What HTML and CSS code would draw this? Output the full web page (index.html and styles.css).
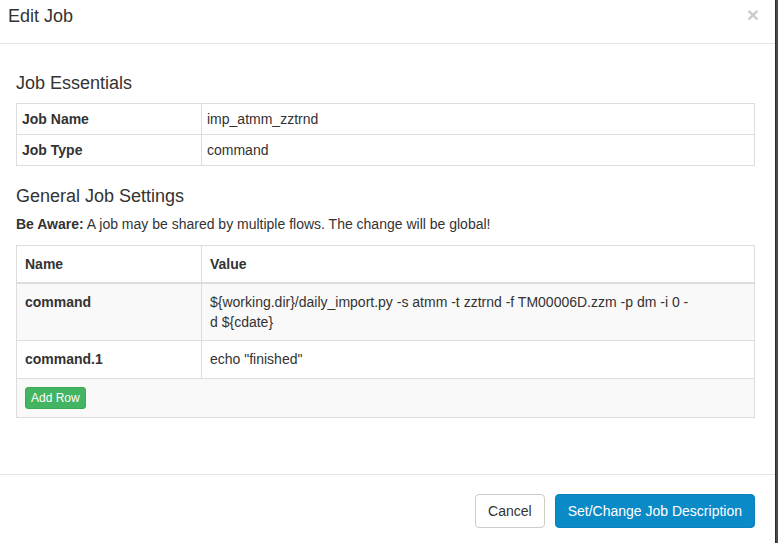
FILE: index.html
```html
<!DOCTYPE html>
<html>
<head>
<meta charset="utf-8">
<link rel="stylesheet" href="styles.css">
</head>
<body>
<div class="modal">
  <div class="modal-header">
    <h3 class="modal-title">Edit Job</h3>
    <span class="close">&times;</span>
  </div>
  <div class="modal-body">
    <h4 class="section-title">Job Essentials</h4>
    <table class="table table-condensed">
      <tbody>
        <tr><th class="col-name">Job Name</th><td>imp_atmm_zztrnd</td></tr>
        <tr><th class="col-name">Job Type</th><td>command</td></tr>
      </tbody>
    </table>
    <h4 class="section-title">General Job Settings</h4>
    <p class="aware"><strong>Be Aware:</strong> A job may be shared by multiple flows. The change will be global!</p>
    <table class="table table-params">
      <thead>
        <tr><th class="col-name">Name</th><th>Value</th></tr>
      </thead>
      <tbody>
        <tr class="striped"><th>command</th><td>${working.dir}/daily_import.py -s atmm -t zztrnd -f TM00006D.zzm -p dm -i 0 -<br>d ${cdate}</td></tr>
        <tr class="single"><th>command.1</th><td>echo "finished"</td></tr>
        <tr class="striped"><td colspan="2"><button class="btn btn-success btn-xs">Add Row</button></td></tr>
      </tbody>
    </table>
  </div>
  <div class="modal-footer">
    <button class="btn btn-default">Cancel</button>
    <button class="btn btn-primary">Set/Change Job Description</button>
  </div>
</div>
</body>
</html>
```
FILE: styles.css
```css
html, body {
  margin: 0;
  padding: 0;
  height: 100%;
}
body {
  background: #4a4a4a;
  font-family: "Liberation Sans", Arial, sans-serif;
  font-size: 14px;
  line-height: 20px;
  color: #333;
  overflow: hidden;
}
.modal {
  width: 775px;
  height: 543px;
  background: #fff;
  border-right: 1px solid #2b2b2b;
  display: flex;
  flex-direction: column;
}
.modal-header {
  flex-shrink: 0;
  border-bottom: 1px solid #e5e5e5;
  display: flex;
  justify-content: space-between;
  align-items: flex-start;
  padding: 4px 20px 0 8px;
  height: 39px;
}
.modal-title {
  margin: 0;
  font-size: 18px;
  font-weight: normal;
  line-height: 25px;
  color: #333;
}
.close {
  font-size: 21px;
  font-weight: bold;
  line-height: 21px;
  color: #000;
  opacity: 0.2;
  margin-top: 0;
  margin-right: -4px;
}
.modal-body {
  flex-shrink: 0;
  padding: 29px 20px 36px 16px;
}
.section-title {
  margin: 0 0 10px;
  font-size: 18px;
  font-weight: normal;
  line-height: 20px;
  color: #333;
}
.aware {
  margin: -2px 0 11px;
  font-size: 14px;
  line-height: 20px;
}
.aware strong {
  font-weight: bold;
}
.table {
  width: 100%;
  border-collapse: collapse;
  border: 1px solid #ddd;
  margin-bottom: 20px;
}
.table th, .table td {
  text-align: left;
  vertical-align: top;
  border: 1px solid #ddd;
  line-height: 20px;
}
.table th {
  font-weight: bold;
}
.col-name {
  width: 184px;
}
.table-condensed th, .table-condensed td {
  padding: 5px 5px;
}
.table-condensed .col-name {
  width: 174px;
}
.table-params th, .table-params td {
  padding: 8px 8px;
}
.table-params .single th, .table-params .single td {
  padding-bottom: 9px;
}
.table-params .col-name {
  width: 168px;
}
.table-params thead th {
  border-bottom: 2px solid #ddd;
}
.table-params .striped td, .table-params .striped th {
  background: #f9f9f9;
}
.btn {
  font-family: "Liberation Sans", Arial, sans-serif;
  font-size: 14px;
  line-height: 20px;
  border-radius: 4px;
  border: 1px solid transparent;
  padding: 6px 12px;
  cursor: pointer;
}
.btn-xs {
  display: block;
  font-size: 12px;
  line-height: 18px;
  padding: 1px 5px;
  border-radius: 3px;
}
.btn-success {
  background: #43b461;
  border-color: #3aa957;
  color: #fff;
}
.btn-default {
  background: #fff;
  border-color: #ccc;
  color: #333;
}
.btn-primary {
  background: #0b8ac8;
  border-color: #0a81bc;
  color: #fff;
}
.modal-footer {
  flex-shrink: 0;
  border-top: 1px solid #e5e5e5;
  padding: 19px 20px 15px;
  display: flex;
  justify-content: flex-end;
  gap: 10px;
  align-items: flex-start;
}
```
